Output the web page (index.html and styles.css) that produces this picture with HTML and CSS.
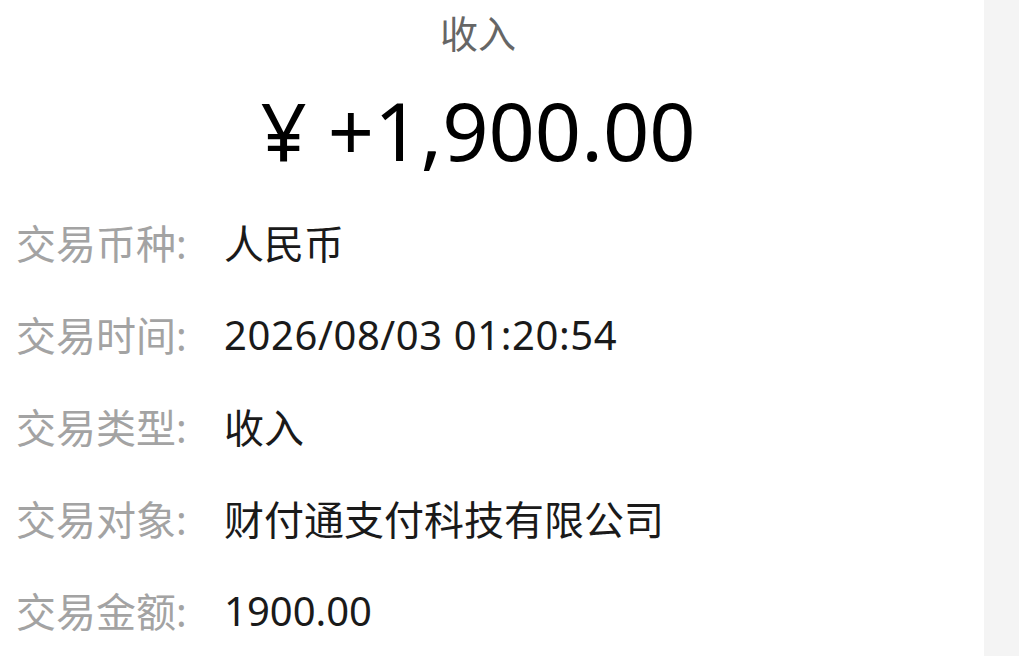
FILE: index.html
```html
<!DOCTYPE html>
<html lang="zh-CN">
<head>
<meta charset="utf-8">
<title>收入</title>
<link rel="stylesheet" href="styles.css">
</head>
<body>
<div class="page">
  <main class="detail">
    <div class="title">收入</div>
    <div class="amount">¥ +1,900.00</div>
    <div class="rows">
      <div class="row"><span class="label">交易币种:</span><span class="value">人民币</span></div>
      <div class="row"><span class="label">交易时间:</span><span class="value value-num">2026/08/03 01:20:54</span></div>
      <div class="row"><span class="label">交易类型:</span><span class="value">收入</span></div>
      <div class="row"><span class="label">交易对象:</span><span class="value">财付通支付科技有限公司</span></div>
      <div class="row"><span class="label">交易金额:</span><span class="value">1900.00</span></div>
    </div>
  </main>
  <aside class="side"></aside>
</div>
</body>
</html>
```

FILE: styles.css
```css
html, body {
  margin: 0;
  padding: 0;
  background: #ffffff;
}
body {
  font-family: "Noto Sans", "Noto Sans CJK SC", sans-serif;
  overflow: hidden;
}
.page {
  display: flex;
  width: 1019px;
  height: 656px;
}
.detail {
  width: 984px;
  padding-right: 28px;
  box-sizing: border-box;
  display: flex;
  flex-direction: column;
}
.side {
  flex: 1;
  background: #f4f4f4;
}
.title {
  height: 66px;
  line-height: 66px;
  text-align: center;
  font-size: 38px;
  color: #666666;
}
.amount {
  height: 133px;
  line-height: 128px;
  text-align: center;
  font-size: 81px;
  color: #000000;
}
.rows {
  display: flex;
  flex-direction: column;
}
.row {
  height: 92px;
  display: flex;
  align-items: center;
  padding-left: 16px;
  font-size: 40px;
}
.label {
  width: 208px;
  flex: none;
  color: #a3a3a3;
}
.value {
  color: #1a1a1a;
}
.value-num {
  letter-spacing: 0.6px;
}
```
